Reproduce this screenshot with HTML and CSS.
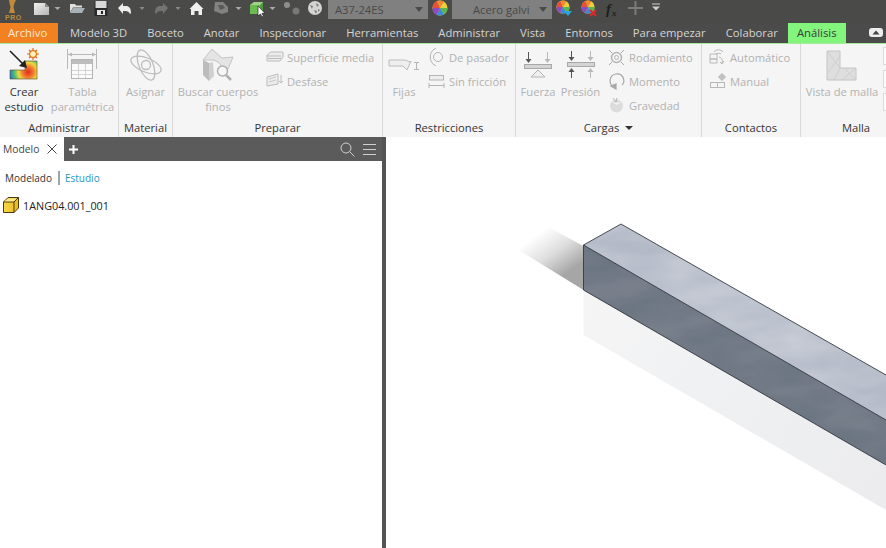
FILE: index.html
```html
<!DOCTYPE html>
<html lang="es">
<head>
<meta charset="utf-8">
<title>Análisis</title>
<link rel="stylesheet" href="styles.css">
</head>
<body>
<svg class="defs" width="0" height="0" aria-hidden="true">
  <defs>
    <symbol id="ball" viewBox="-8 -8 16 16">
      <circle r="7.500" fill="#e8d040"/>
      <path d="M0 0L-7.500 0A7.500 7.500 0 0 1 -3 -6.900Z" fill="#e4503c"/>
      <path d="M0 0L-3 -6.900A7.500 7.500 0 0 1 4 -6.300Z" fill="#f08a32"/>
      <path d="M0 0L7.500 0A7.500 7.500 0 0 1 4 6.300Z" fill="#58b84c"/>
      <path d="M0 0L4 6.300A7.500 7.500 0 0 1 -3 6.900Z" fill="#3a8ad8"/>
      <path d="M0 0L-3 6.900A7.500 7.500 0 0 1 -7.500 0Z" fill="#8a4cc0"/>
    </symbol>
    <linearGradient id="doc" x1="0" y1="0" x2="1" y2="1"><stop offset="0" stop-color="#f2f2f2"/><stop offset="1" stop-color="#b4b4b4"/></linearGradient>
    <radialGradient id="heat" gradientUnits="userSpaceOnUse" cx="28" cy="72" r="19">
      <stop offset="0" stop-color="#e02a20"/><stop offset=".3" stop-color="#f08030"/><stop offset=".5" stop-color="#f0d840"/><stop offset=".72" stop-color="#50c070"/><stop offset="1" stop-color="#2070d8"/>
    </radialGradient>
    <linearGradient id="cube" x1="0" y1="0" x2="1" y2="0"><stop offset="0" stop-color="#f7d84c"/><stop offset="1" stop-color="#e8b820"/></linearGradient>
  </defs>
</svg>

<div class="app">
  <header class="qat">
    <svg class="logo" width="28" height="23" viewBox="0 0 28 23"><path d="M9 0h7l-1.500 3-1 4 1.500 6h-6l1.500-6-1-4z" fill="#c08a38"/><text x="5" y="20" class="pro">PRO</text></svg>
    <svg width="24" height="23" viewBox="28 0 24 23"><path d="M34 3h11l4 4v8H34z" fill="url(#doc)"/><path d="M45 3l4 4h-4z" fill="#8a8a8a"/></svg>
    <svg width="10" height="23" viewBox="52 0 10 23"><path d="M54.500 7h6l-3 3z" fill="#aaa"/></svg>
    <svg width="28" height="23" viewBox="62 0 28 23"><path d="M70 4h5l1 1.500h6v2h-9l-3 5z" fill="#e0e0e0"/><path d="M73 8h12l-3 5H70z" fill="#a8b0b8"/></svg>
    <svg width="23" height="23" viewBox="90 0 23 23"><rect x="94.500" y="1" width="13" height="15" fill="#2a2a2a"/><rect x="95.500" y="1" width="11" height="7" fill="#d8d8d8"/><rect x="97" y="10" width="8" height="5" fill="#e4e4e4"/><rect x="101" y="11" width="2" height="3" fill="#222"/></svg>
    <svg width="23" height="23" viewBox="113 0 23 23"><path d="M118 8l5-5v3h3c3 0 5 2 5 7l-1 1c-1-2-2-3-5-3h-2v3z" fill="#eee"/></svg>
    <svg width="12" height="23" viewBox="136 0 12 23"><path d="M139.500 7h5l-2.500 3z" fill="#8a8a8a"/></svg>
    <svg width="24" height="23" viewBox="148 0 24 23"><path d="M168 8l-5-5v3h-3c-3 0-5 2-5 7l1 1c1-2 2-3 5-3h2v3z" fill="#737373"/></svg>
    <svg width="12" height="23" viewBox="172 0 12 23"><path d="M175.500 7h5l-2.500 3z" fill="#8a8a8a"/></svg>
    <svg width="24" height="23" viewBox="184 0 24 23"><path d="M196.500 2l7 7h-1.500v6h-3.500v-4h-4v4H191v-6h-1.500z" fill="#f0f0f0"/></svg>
    <svg width="24" height="23" viewBox="208 0 24 23"><path d="M215 2h8l5 5v5l-6 2-8-3z" fill="#828282"/><path d="M218 5h5l2 3-5 2z" fill="#5a5a5a"/></svg>
    <svg width="12" height="23" viewBox="232 0 12 23"><path d="M235.500 7h6l-3 3z" fill="#aaa"/></svg>
    <svg width="22" height="23" viewBox="244 0 22 23"><path d="M250 5l4-3h9v9l-3 3h-10z" fill="#4f9a3e"/><path d="M250 5h10v9h-10z" fill="#6cbc52"/><path d="M250 5l4-3h9l-3 3z" fill="#9ed48a"/><path d="M258 6v10l2.500-2 1.500 3 1.500-.700-1.500-3h3z" fill="#fff" stroke="#111" stroke-width=".6"/></svg>
    <svg width="12" height="23" viewBox="266 0 12 23"><path d="M269.500 7h6l-3 3z" fill="#aaa"/></svg>
    <svg width="26" height="23" viewBox="278 0 26 23"><circle cx="287" cy="5" r="3" fill="#8e8e8e"/><circle cx="296" cy="11" r="3.500" fill="#787878"/></svg>
    <svg width="24" height="23" viewBox="304 0 24 23"><circle cx="315" cy="8" r="7" fill="#d4d4d4"/><path d="M310 5l3 1-1 3zM316 3l3 2-2 2zM314 10l3 1-1 3zM318 9l2 1-2 2z" fill="#7c7c7c"/></svg>
    <div class="combo combo-a"><span>A37-24ES</span><i class="combo-caret"></i></div>
    <svg width="24" height="23" viewBox="428 0 24 23"><use href="#ball" x="432" y="0" width="16" height="16"/></svg>
    <div class="combo combo-b"><span>Acero galvi</span><i class="combo-caret"></i></div>
    <svg width="24" height="23" viewBox="552 0 24 23"><use href="#ball" x="556" y="0" width="14" height="14"/><path d="M564 11h8l-4 5z" fill="#28a8e0"/></svg>
    <svg width="24" height="23" viewBox="576 0 24 23"><use href="#ball" x="581" y="0" width="14" height="14"/><path d="M590 10l6 6M596 10l-6 6" stroke="#e02828" stroke-width="2"/></svg>
    <svg width="24" height="23" viewBox="600 0 24 23"><text x="606" y="14" class="fx">f</text><text x="612" y="16" class="fx-sub">x</text></svg>
    <svg width="24" height="23" viewBox="624 0 24 23"><path d="M628 8h15M635.500 1v14" stroke="#7b7b7b" stroke-width="2"/></svg>
    <svg width="16" height="23" viewBox="648 0 16 23"><path d="M652 4h8" stroke="#cfcfcf"/><path d="M652 6.500h8l-4 4z" fill="#cfcfcf"/></svg>
  </header>

  <nav class="tabs">
    <span class="tab tab-file">Archivo</span>
    <span class="tab">Modelo 3D</span>
    <span class="tab">Boceto</span>
    <span class="tab">Anotar</span>
    <span class="tab">Inspeccionar</span>
    <span class="tab">Herramientas</span>
    <span class="tab">Administrar</span>
    <span class="tab">Vista</span>
    <span class="tab">Entornos</span>
    <span class="tab">Para empezar</span>
    <span class="tab">Colaborar</span>
    <span class="tab tab-active">Análisis</span>
    <svg class="collapse" width="14" height="10" viewBox="0 0 14 10"><rect width="14" height="9" rx="3" fill="#eee"/><path d="M3.500 6.500l3.500-4 3.500 4z" fill="#444"/></svg>
  </nav>

  <section class="ribbon">
    <div class="panel p-admin">
      <div class="panel-body">
        <div class="big w38">
          <svg class="big-icon" width="38" height="36" viewBox="5 48 38 36">
            <path d="M10 70h15v-9h12v18H10z" fill="url(#heat)" stroke="#5a4a20" stroke-width=".6"/>
            <path d="M10 51l13 13" stroke="#222" stroke-width="1.600"/><path d="M27 68l-8-2 6-6z" fill="#222"/>
            <circle cx="33" cy="54" r="3.500" fill="#fff2c0" stroke="#e88a20" stroke-width="1.500"/>
            <path d="M33 48v3M33 57v3M27 54h3M36 54h3M29 50l2 2M35 56l2 2M37 50l-2 2M31 56l-2 2" stroke="#e86a20" stroke-width="1.200"/>
          </svg>
          <span class="on">Crear</span><span class="on">estudio</span>
        </div>
        <div class="big w63">
          <svg class="big-icon" width="63" height="36" viewBox="51 48 63 36">
            <path d="M67.500 49v20M96.500 49v20M68 54.500h28" stroke="#b8b8b8" fill="none"/>
            <path d="M68 54.500l4-2v4zM96 54.500l-4-2v4z" fill="#b8b8b8"/>
            <rect x="71.500" y="59.500" width="21" height="19" fill="#fbfbfb" stroke="#b4b4b4"/>
            <rect x="72" y="60" width="20" height="4" fill="#bdbdbd"/>
            <path d="M78.500 64v14M85.500 64v14M72 70.500h20M72 74.500h20" stroke="#d4d4d4"/>
          </svg>
          <span>Tabla</span><span>paramétrica</span>
        </div>
      </div>
      <div class="panel-label">Administrar</div>
    </div>

    <div class="panel p-material">
      <div class="panel-body center">
        <div class="big">
          <svg class="big-icon" width="38" height="36" viewBox="127 48 38 36" fill="none" stroke="#bcbcbc" stroke-width="1.300">
            <ellipse cx="146" cy="65" rx="16" ry="7" transform="rotate(22 146 65)"/>
            <ellipse cx="146" cy="65" rx="16" ry="7" transform="rotate(68 146 65)"/>
            <circle cx="146" cy="65" r="4.500"/>
          </svg>
          <span>Asignar</span>
        </div>
      </div>
      <div class="panel-label">Material</div>
    </div>

    <div class="panel p-prep">
      <div class="panel-body">
        <div class="big w80">
          <svg class="big-icon" width="80" height="36" viewBox="178 48 80 36">
            <path d="M203 60l9-11 10 9 11-1-5 12h-4l-6-7-5-2z" fill="#e4e4e4" stroke="#c4c4c4"/>
            <path d="M203 60l6 3v18l-6-6z" fill="#bcbcbc"/><path d="M209 63l4-1 1 14-5 5z" fill="#d0d0d0"/>
            <circle cx="222.500" cy="71" r="5" fill="#f6f6f6" stroke="#b0b0b0" stroke-width="1.500"/>
            <path d="M226 75l5 5" stroke="#b0b0b0" stroke-width="2.500"/>
          </svg>
          <span>Buscar cuerpos</span><span>finos</span>
        </div>
        <div class="small-col">
          <div class="row">
            <svg class="s" width="18" height="18" viewBox="266 49 18 18"><path d="M267 56l4-3h12v5l-3 4h-13z" fill="#ececec" stroke="#bcbcbc"/><path d="M267 57h14M268 59.500h13" stroke="#bcbcbc"/></svg>
            <span>Superficie media</span>
          </div>
          <div class="row">
            <svg class="s" width="18" height="18" viewBox="266 73 18 18"><path d="M267 78l11-3v10l-11 2z" fill="#ececec" stroke="#bcbcbc"/><path d="M269 80l7-2M269 83l7-2" stroke="#c8c8c8"/><path d="M281 76v8M279 82l2 2 2-2" stroke="#bcbcbc" fill="none"/></svg>
            <span>Desfase</span>
          </div>
        </div>
      </div>
      <div class="panel-label">Preparar</div>
    </div>

    <div class="panel p-restr">
      <div class="panel-body">
        <div class="big w32">
          <svg class="big-icon" width="32" height="36" viewBox="388 48 32 36">
            <path d="M389 60h15c3 0 4 2 7 2v-1l-4 9-4-4h-14z" fill="#eee" stroke="#bcbcbc"/>
            <path d="M414 62.500h5M416.500 63v6M414 69.500h5" stroke="#b4b4b4" fill="none"/>
          </svg>
          <span>Fijas</span>
        </div>
        <div class="small-col">
          <div class="row">
            <svg class="s" width="18" height="18" viewBox="428 49 18 18" fill="none" stroke="#b4b4b4"><circle cx="438" cy="58" r="4.500"/><path d="M434 50c-5 4-5 12 0 16"/><path d="M433 51l3-2M433 65l3 2"/></svg>
            <span>De pasador</span>
          </div>
          <div class="row">
            <svg class="s" width="18" height="18" viewBox="428 73 18 18" fill="none" stroke="#b4b4b4"><rect x="429.500" y="76.500" width="14" height="4.500" fill="#eee"/><path d="M429 86.500h15M429 84v5M444 84v5"/></svg>
            <span>Sin fricción</span>
          </div>
        </div>
      </div>
      <div class="panel-label">Restricciones</div>
    </div>

    <div class="panel p-cargas">
      <div class="panel-body">
        <div class="big w34">
          <svg class="big-icon" width="34" height="36" viewBox="521 48 34 36">
            <path d="M528.500 52v10" stroke="#555"/><path d="M525.500 59h6l-3 4z" fill="#555"/>
            <path d="M547.500 52v10" stroke="#b8b8b8"/><path d="M544.500 59h6l-3 4z" fill="#b8b8b8"/>
            <rect x="524.500" y="64.500" width="27" height="4" fill="#d4d4d4" stroke="#a8a8a8"/>
            <path d="M538 70l-7 7h14z" fill="#efefef" stroke="#b4b4b4"/>
          </svg>
          <span>Fuerza</span>
        </div>
        <div class="big w39">
          <svg class="big-icon" width="39" height="36" viewBox="561 48 39 36">
            <path d="M571.500 51v9" stroke="#555"/><path d="M568.500 57h6l-3 4z" fill="#555"/>
            <path d="M590.500 51v9" stroke="#b8b8b8"/><path d="M587.500 57h6l-3 4z" fill="#b8b8b8"/>
            <rect x="567.500" y="62.500" width="27" height="4" fill="#d4d4d4" stroke="#a8a8a8"/>
            <path d="M571.500 71v7" stroke="#555"/><path d="M568.500 72h6l-3-4z" fill="#555"/>
            <path d="M590.500 71v7" stroke="#b8b8b8"/><path d="M587.500 72h6l-3-4z" fill="#b8b8b8"/>
          </svg>
          <span>Presión</span>
        </div>
        <div class="small-col">
          <div class="row">
            <svg class="s" width="18" height="18" viewBox="608 49 18 18" fill="none" stroke="#b4b4b4"><circle cx="616.500" cy="58.500" r="5" stroke-width="1.500"/><circle cx="616.500" cy="58.500" r="2"/><path d="M609 51l3 3M624 51l-3 3M609 66l3-3M624 66l-3-3" stroke="#a8a8a8"/></svg>
            <span>Rodamiento</span>
          </div>
          <div class="row">
            <svg class="s" width="18" height="18" viewBox="608 73 18 18" fill="none" stroke="#a8a8a8" stroke-width="1.200"><path d="M614 88c-6-3-5-12 2-13 7-1 10 7 6 11"/><path d="M611 87l5-2v5z" fill="#a8a8a8"/></svg>
            <span>Momento</span>
          </div>
          <div class="row">
            <svg class="s" width="18" height="18" viewBox="608 97 18 18"><circle cx="616.500" cy="107" r="6.500" fill="#dcdcdc"/><path d="M612 103c2 1 7 1 9 0l-4 3z" fill="#f4f4f4"/><path d="M613 99l3 4 1-4" stroke="#b4b4b4" fill="none"/></svg>
            <span>Gravedad</span>
          </div>
        </div>
      </div>
      <div class="panel-label">Cargas <i class="label-caret"></i></div>
    </div>

    <div class="panel p-contact">
      <div class="panel-body">
        <div class="small-col">
          <div class="row">
            <svg class="s" width="18" height="18" viewBox="708 49 18 18" fill="none" stroke="#b8b8b8"><path d="M709 55h7v5h-7zM709 60h7v4h-7z"/><path d="M713 53c2-3 7-3 9 0M715 55c1-1 4-1 5 0M718 58c3 1 4 3 3 6M723 62l-2 3-2-2"/></svg>
            <span>Automático</span>
          </div>
          <div class="row">
            <svg class="s" width="18" height="18" viewBox="708 73 18 18" fill="none" stroke="#b8b8b8"><rect x="709.500" y="83.500" width="7" height="5"/><rect x="716.500" y="83.500" width="7" height="5"/><circle cx="721" cy="78" r="2.500" fill="#d8d8d8"/><path d="M721 74v8M717 78h8"/></svg>
            <span>Manual</span>
          </div>
        </div>
      </div>
      <div class="panel-label">Contactos</div>
    </div>

    <div class="panel p-malla">
      <div class="panel-body">
        <div class="big w72">
          <svg class="big-icon" width="72" height="36" viewBox="806 48 72 36">
            <path d="M827 51h13v17h16v12h-29z" fill="#dedede" stroke="#c4c4c4"/>
            <path d="M827 51l13 17M840 56l-13 18M840 68l-6 12M844 68l12 12M856 68l-14 12" stroke="#cfcfcf" fill="none"/>
          </svg>
          <span>Vista de malla</span>
        </div>
        <div class="stubs"><i></i><i></i><i></i></div>
      </div>
      <div class="panel-label">Malla</div>
    </div>
  </section>

  <main class="workspace">
    <aside class="browser">
      <div class="browser-head">
        <div class="browser-tab">
          <span>Modelo</span>
          <svg width="10" height="10" viewBox="0 0 10 10"><path d="M.5.500l9 9M9.500.500l-9 9" stroke="#444"/></svg>
        </div>
        <svg class="plus" width="9" height="9" viewBox="0 0 9 9"><path d="M4.500 0v9M0 4.500h9" stroke="#fff" stroke-width="2"/></svg>
        <svg class="head-search" width="15" height="15" viewBox="0 0 15 15" fill="none" stroke="#d0d0d0"><circle cx="6" cy="6" r="5"/><path d="M9.500 9.500l5 5"/></svg>
        <svg width="13" height="11" viewBox="0 0 13 11"><path d="M0 .500h13M0 5.500h13M0 10.500h13" stroke="#d0d0d0"/></svg>
      </div>
      <div class="crumbs"><span>Modelado</span><span class="crumb-link">Estudio</span></div>
      <div class="tree-row">
        <svg width="16" height="16" viewBox="0 0 16 16"><path d="M.5 5L5 .5h10.500V11L11 15.500H.5z" fill="url(#cube)" stroke="#4a3a10"/><path d="M.5 5H11v10.500M11 5l4.500-4.500" fill="none" stroke="#4a3a10"/><path d="M1.500 4.200L5.400 1.400h8.200L10.700 4.200z" fill="#fbe98a"/></svg>
        <span>1ANG04.001_001</span>
      </div>
    </aside>
    <div class="viewport">
      <svg class="scene" width="500" height="411" viewBox="386 137 500 411">
        <defs>
          <linearGradient id="shadow" gradientUnits="userSpaceOnUse" x1="583" y1="262" x2="555" y2="222">
            <stop offset="0" stop-color="#a6a6a6"/><stop offset=".5" stop-color="#dedede"/><stop offset="1" stop-color="#fff"/>
          </linearGradient>
          <linearGradient id="reflect" gradientUnits="userSpaceOnUse" x1="583" y1="300" x2="886" y2="480">
            <stop offset="0" stop-color="#f5f5f6"/><stop offset=".5" stop-color="#eff0f1"/><stop offset="1" stop-color="#ececee"/>
          </linearGradient>
          <filter id="mottle-top" x="0" y="0" width="100%" height="100%">
            <feTurbulence type="fractalNoise" baseFrequency="0.012 0.035" numOctaves="3" seed="4"/>
            <feColorMatrix values="0 0 0 0 1  0 0 0 0 1  0 0 0 0 1  0.400 0 0 0 -0.100"/>
            <feComposite in2="SourceGraphic" operator="in" result="m"/>
            <feMerge><feMergeNode in="SourceGraphic"/><feMergeNode in="m"/></feMerge>
          </filter>
          <filter id="mottle-front" x="0" y="0" width="100%" height="100%">
            <feTurbulence type="fractalNoise" baseFrequency="0.012 0.035" numOctaves="3" seed="9"/>
            <feColorMatrix values="0 0 0 0 1  0 0 0 0 1  0 0 0 0 1  0.110 0 0 0 -0.030"/>
            <feComposite in2="SourceGraphic" operator="in" result="m"/>
            <feMerge><feMergeNode in="SourceGraphic"/><feMergeNode in="m"/></feMerge>
          </filter>
        </defs>
        <polygon points="548,227 583.500,246 583.500,290 517,249" fill="url(#shadow)"/>
        <polygon points="583.500,290 886,465 886,510 583.500,335" fill="url(#reflect)"/>
        <polygon points="583.500,245 621,224 886,375 886,420" fill="#b3bac7" filter="url(#mottle-top)"/>
        <polygon points="583.500,245 886,420 886,465 583.500,290" fill="#6c7482" filter="url(#mottle-front)"/>
        <path d="M886 375L621 224 583.500 245 886 420M583.500 245v45L886 465" fill="none" stroke="#23272f" stroke-width=".8"/>
      </svg>
    </div>
  </main>
</div>
</body>
</html>
```

FILE: styles.css
```css
* { box-sizing: border-box; }
html, body { margin: 0; height: 100%; overflow: hidden; background: #fff; }
body { font-family: "Open Sans", "Noto Sans", sans-serif; font-size: 11.2px; color: #333; }
.defs { position: absolute; }
svg { display: block; flex: none; }

.app { display: flex; flex-direction: column; width: 886px; height: 548px; overflow: hidden; }

/* quick access bar */
.qat { display: flex; height: 23px; background: #4a4a48; }
.pro { font: bold 7px "Liberation Sans", sans-serif; fill: #b88a3a; letter-spacing: .5px; }
.fx { font: italic bold 15px "Liberation Serif", serif; fill: #1e1e1e; }
.fx-sub { font: italic bold 9px "Liberation Serif", serif; fill: #1e1e1e; }
.combo { display: flex; align-items: center; justify-content: space-between; width: 100px; height: 19px; background: #808080; color: #484848; padding: 0 5px 0 7px; }
.combo-b { padding-left: 21px; }
.combo-caret { width: 0; height: 0; border: 4px solid transparent; border-top: 5px solid #4a4a4a; border-bottom: 0; }

/* ribbon tabs */
.tabs { display: flex; align-items: center; height: 21px; background: #4b4b4b; border-bottom: 1px solid #a4eb9b; color: #d4d4d4; font-size: 11.25px; }
.tab { display: flex; align-items: center; flex: none; height: 20px; padding: 0 10px 1px; white-space: nowrap; }
.tab-file { width: 58px; margin-right: 2px; background: #f18121; color: #f8e8d8; padding: 0 0 1px 8px; }
.tab-active { background: #83f47c; color: #3c3c3c; width: 58px; justify-content: center; padding: 0 0 1px; }
.collapse { margin-left: 23px; }

/* ribbon */
.ribbon { display: flex; height: 93px; background: #f5f5f5; overflow: hidden; }
.panel { display: flex; flex-direction: column; flex: none; border-right: 1px solid #d9d9d9; }
.panel-body { display: flex; height: 75px; color: #b2b2b2; }
.panel-body.center { justify-content: center; }
.panel-label { display: flex; align-items: center; justify-content: center; gap: 4px; height: 17px; color: #333; white-space: nowrap; }
.label-caret { width: 0; height: 0; border: 4px solid transparent; border-top: 4px solid #333; border-bottom: 0; margin-left: 2px; }

.p-admin { width: 119px; }
.p-admin .panel-body { padding-left: 5px; gap: 8px; }
.p-material { width: 54px; }
.p-prep { width: 210px; }
.p-prep .panel-body { padding-left: 5px; gap: 8px; }
.p-restr { width: 133px; }
.p-restr .panel-body { padding-left: 5px; gap: 8px; }
.p-cargas { width: 186px; }
.p-cargas .panel-body { padding-left: 5px; gap: 6px; }
.p-cargas .small-col { margin-left: 2px; }
.p-contact { width: 99px; }
.p-contact .panel-body { padding-left: 7px; }
.p-malla { width: 110px; border-right: 0; }
.p-malla .panel-body { padding-left: 5px; }

.big { display: flex; flex-direction: column; align-items: center; padding-top: 4px; line-height: 15px; white-space: nowrap; flex: none; }
.big .on { color: #333; }
.w32 { width: 32px; }
.w34 { width: 34px; }
.w38 { width: 38px; }
.w39 { width: 39px; }
.w63 { width: 63px; }
.w72 { width: 72px; }
.w80 { width: 80px; }

.small-col { display: flex; flex-direction: column; padding-top: 1px; }
.row { display: flex; align-items: center; gap: 3px; height: 24px; white-space: nowrap; }
.stubs { display: flex; flex-direction: column; gap: 5px; margin: 3px 0 0 5px; }
.stubs i { display: block; width: 8px; height: 18px; background: #fbfbfb; border: 1px solid #dcdcdc; }

/* workspace */
.workspace { display: flex; flex: 1; min-height: 0; }
.browser { width: 386px; flex: none; border-right: 4px solid #555; background: #fff; }
.browser-head { display: flex; align-items: center; height: 24px; background: #5b5b5b; padding-right: 6px; }
.browser-tab { display: flex; align-items: center; justify-content: space-between; width: 64px; height: 24px; background: #fff; padding: 0 7px 0 3px; color: #444; font-size: 10.3px; }
.plus { margin-left: 5px; }
.head-search { margin: 0 8px 0 auto; }
.crumbs { display: flex; align-items: center; height: 16px; margin: 9px 0 0 5px; color: #333; font-size: 10px; }
.crumb-link { color: #2a95c8; border-left: 2px solid #9aa6ad; margin-left: 6px; padding-left: 5px; }
.tree-row { display: flex; align-items: center; gap: 4px; height: 18px; margin: 10px 0 0 3px; color: #222; font-size: 10.8px; }
.viewport { flex: 1; min-width: 0; background: #fff; }
.scene { display: block; }
```
